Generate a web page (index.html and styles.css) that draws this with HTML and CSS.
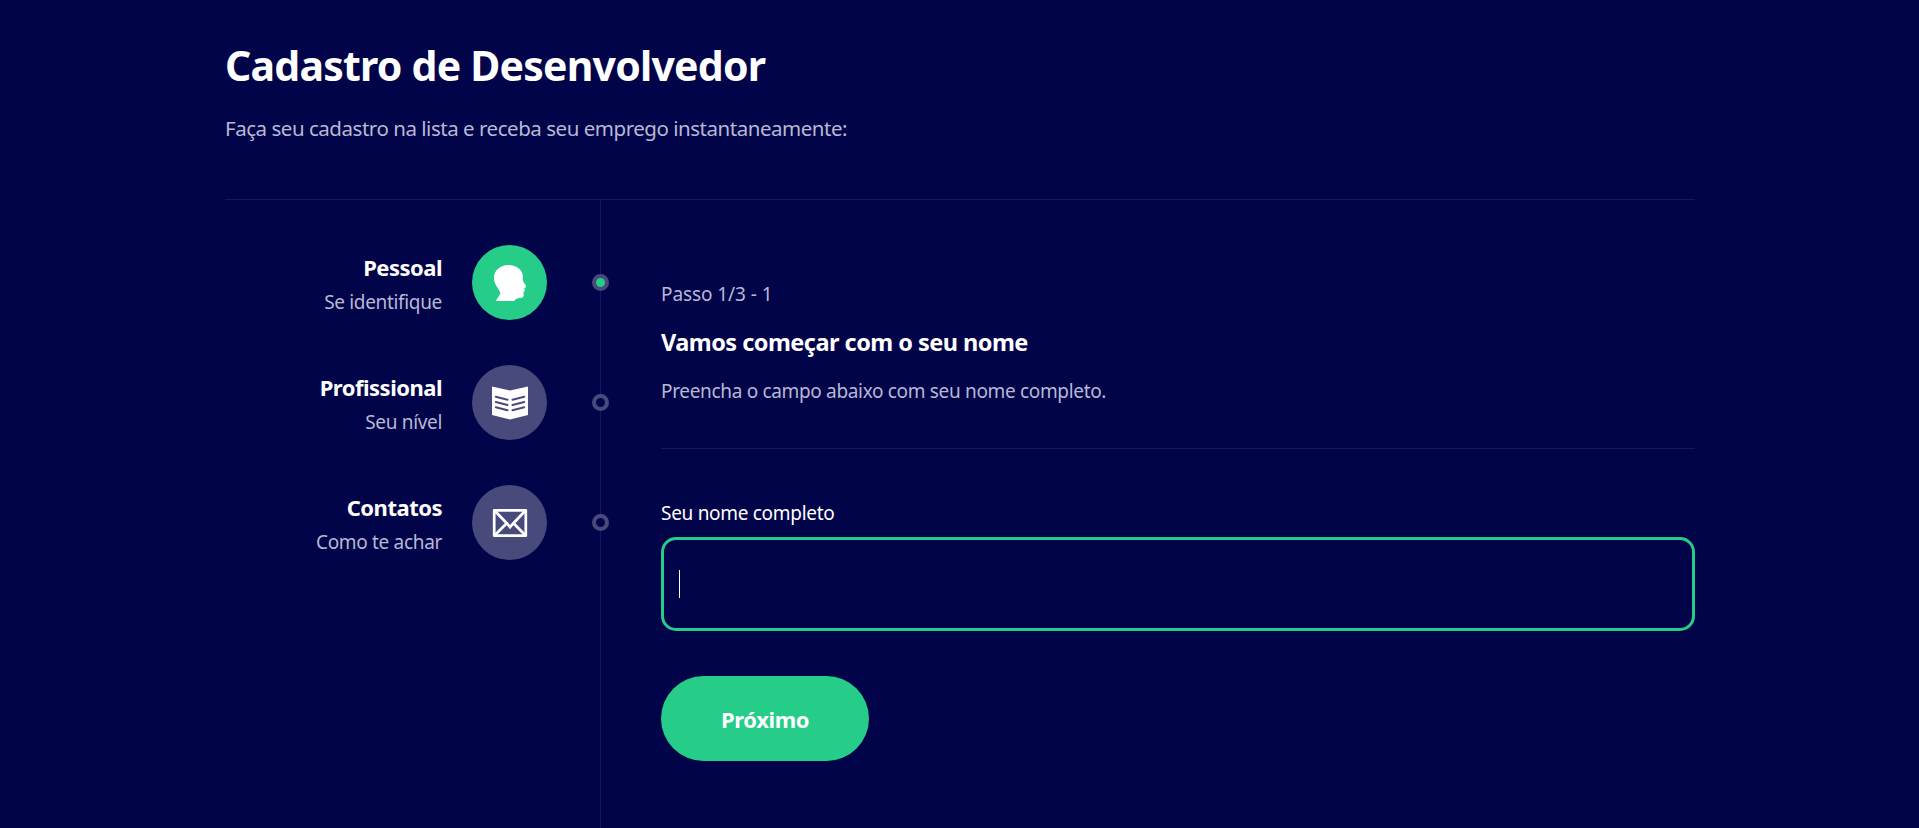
FILE: index.html
```html
<!DOCTYPE html>
<html lang="pt-BR">
<head>
<meta charset="utf-8">
<title>Cadastro de Desenvolvedor</title>
<link rel="stylesheet" href="styles.css">
</head>
<body>
<div class="container">
  <header class="header">
    <h1 class="title">Cadastro de Desenvolvedor</h1>
    <p class="subtitle">Faça seu cadastro na lista e receba seu emprego instantaneamente:</p>
  </header>
  <div class="steps">
    <aside class="sidebar">
      <a class="item active">
        <div class="info"><div class="name">Pessoal</div><div class="desc">Se identifique</div></div>
        <div class="icon">
          <svg width="75" height="75" viewBox="0 0 75 75" fill="#fff"><path d="M23.8 56L28.4 48.8C28.4 47.4 27.2 45.6 26 43.6C23.8 40 22 37 22 32.9C22 25.5 28 20 36.5 20C44.8 20 51 25.4 51 32L50.7 34.8L51.5 37L54 41L53.6 42.6L52.4 43L52.7 45.8L51.4 47.3L51.8 50C51.7 52.2 50.6 52.7 48 53C45 53.4 43.5 54 42 56Z"/></svg>
        </div>
        <div class="point"></div>
      </a>
      <a class="item">
        <div class="info"><div class="name">Profissional</div><div class="desc">Seu nível</div></div>
        <div class="icon">
          <svg width="75" height="75" viewBox="0 0 75 75"><path fill="#fff" d="M20 21.5L38 25.5L56 21.5V50L38 54.5L20 50Z"/><path fill="none" stroke="#494a7c" stroke-width="2" stroke-linecap="round" d="M23.8 31.7L35.5 34.7M23.8 37L35.5 40M23.8 42.2L35.5 45.2M52.2 31.7L40.5 34.7M52.2 37L40.5 40M52.2 42.2L40.5 45.2"/></svg>
        </div>
        <div class="point"></div>
      </a>
      <a class="item">
        <div class="info"><div class="name">Contatos</div><div class="desc">Como te achar</div></div>
        <div class="icon">
          <svg width="75" height="75" viewBox="0 0 75 75" fill="none" stroke="#fff" stroke-width="2.7"><path stroke-linejoin="round" d="M22.2 25.3H53.8V50.7H22.2Z"/><path d="M22.5 25.5L35.2 38.7L38 42.2L41 38.7L53.5 25.5M22.5 50.5L34.5 38.5M53.5 50.5L41.8 38.5"/></svg>
        </div>
        <div class="point"></div>
      </a>
    </aside>
    <main class="page">
      <p class="count">Passo 1/3 - 1</p>
      <h2 class="heading">Vamos começar com o seu nome</h2>
      <p class="hint">Preencha o campo abaixo com seu nome completo.</p>
      <hr class="rule">
      <label class="label" for="name">Seu nome completo</label>
      <div class="field"><span class="caret"></span><input id="name" class="input" type="text"></div>
      <button class="button">Próximo</button>
    </main>
  </div>
</div>
</body>
</html>
```

FILE: styles.css
```css
* { box-sizing: border-box; }
body {
  margin: 0;
  background: #02044a;
  color: #fff;
  font-family: "Segoe UI", "Noto Sans", sans-serif;
}
h1, h2, p { margin: 0; }
.container {
  width: 1470px;
  height: 828px;
  margin-left: 225px;
  display: flex;
  flex-direction: column;
  overflow: hidden;
}
.header {
  height: 200px;
  flex: none;
  padding-top: 36px;
  border-bottom: 1px solid #16195c;
}
.title { font-size: 41px; line-height: 58px; letter-spacing: -0.78px; }
.subtitle {
  margin-top: 19px;
  font-size: 20.5px;
  line-height: 30px;
  letter-spacing: -0.47px;
  color: #b8b8d4;
}
.steps { display: flex; flex: 1; }
.sidebar {
  width: 376px;
  border-right: 1px solid #16195c;
  padding-top: 45px;
  display: flex;
  flex-direction: column;
  gap: 45px;
}
.item { display: flex; align-items: center; height: 75px; margin-right: -9px; }
.info { flex: 1; padding-top: 4px; text-align: right; margin-right: 30px; }
.name { font-weight: 700; font-size: 22px; line-height: 34px; letter-spacing: -0.5px; }
.desc { font-size: 19px; line-height: 36px; letter-spacing: -0.33px; color: #b8b8d4; }
.icon { width: 75px; height: 75px; border-radius: 50%; background: #494a7c; }
.icon svg { display: block; }
.active .icon { background: #25cd89; }
.point {
  width: 17px;
  height: 17px;
  margin-left: 45px;
  border-radius: 50%;
  border: 4px solid #494a7c;
  background: #02044a;
}
.active .point { background: #25cd89; }
.page { flex: 1; padding: 79px 0 0 60px; }
.count { font-size: 19px; line-height: 30px; letter-spacing: -0.08px; color: #b8b8d4; }
.heading { margin-top: 15px; font-size: 23.5px; line-height: 36px; letter-spacing: -0.53px; }
.hint {
  margin-top: 16px;
  font-size: 19px;
  line-height: 30px;
  letter-spacing: -0.33px;
  color: #b8b8d4;
}
.rule { height: 1px; margin: 42px 0 49px; border: 0; background: #16195c; }
.label { display: block; font-size: 19px; line-height: 30px; letter-spacing: -0.3px; }
.field {
  display: flex;
  align-items: center;
  height: 94px;
  margin-top: 9px;
  padding-left: 15px;
  border: 3px solid #25cd89;
  border-radius: 15px;
}
.caret { width: 1px; height: 28px; background: #fff; }
.input { flex: 1; background: none; border: 0; outline: 0; color: #fff; font: inherit; }
.button {
  display: block;
  width: 208px;
  height: 85px;
  margin-top: 45px;
  border: 0;
  border-radius: 43px;
  background: #25cd89;
  color: #fff;
  font: 700 22px "Segoe UI", "Noto Sans", sans-serif;
  letter-spacing: -0.4px;
}
```
